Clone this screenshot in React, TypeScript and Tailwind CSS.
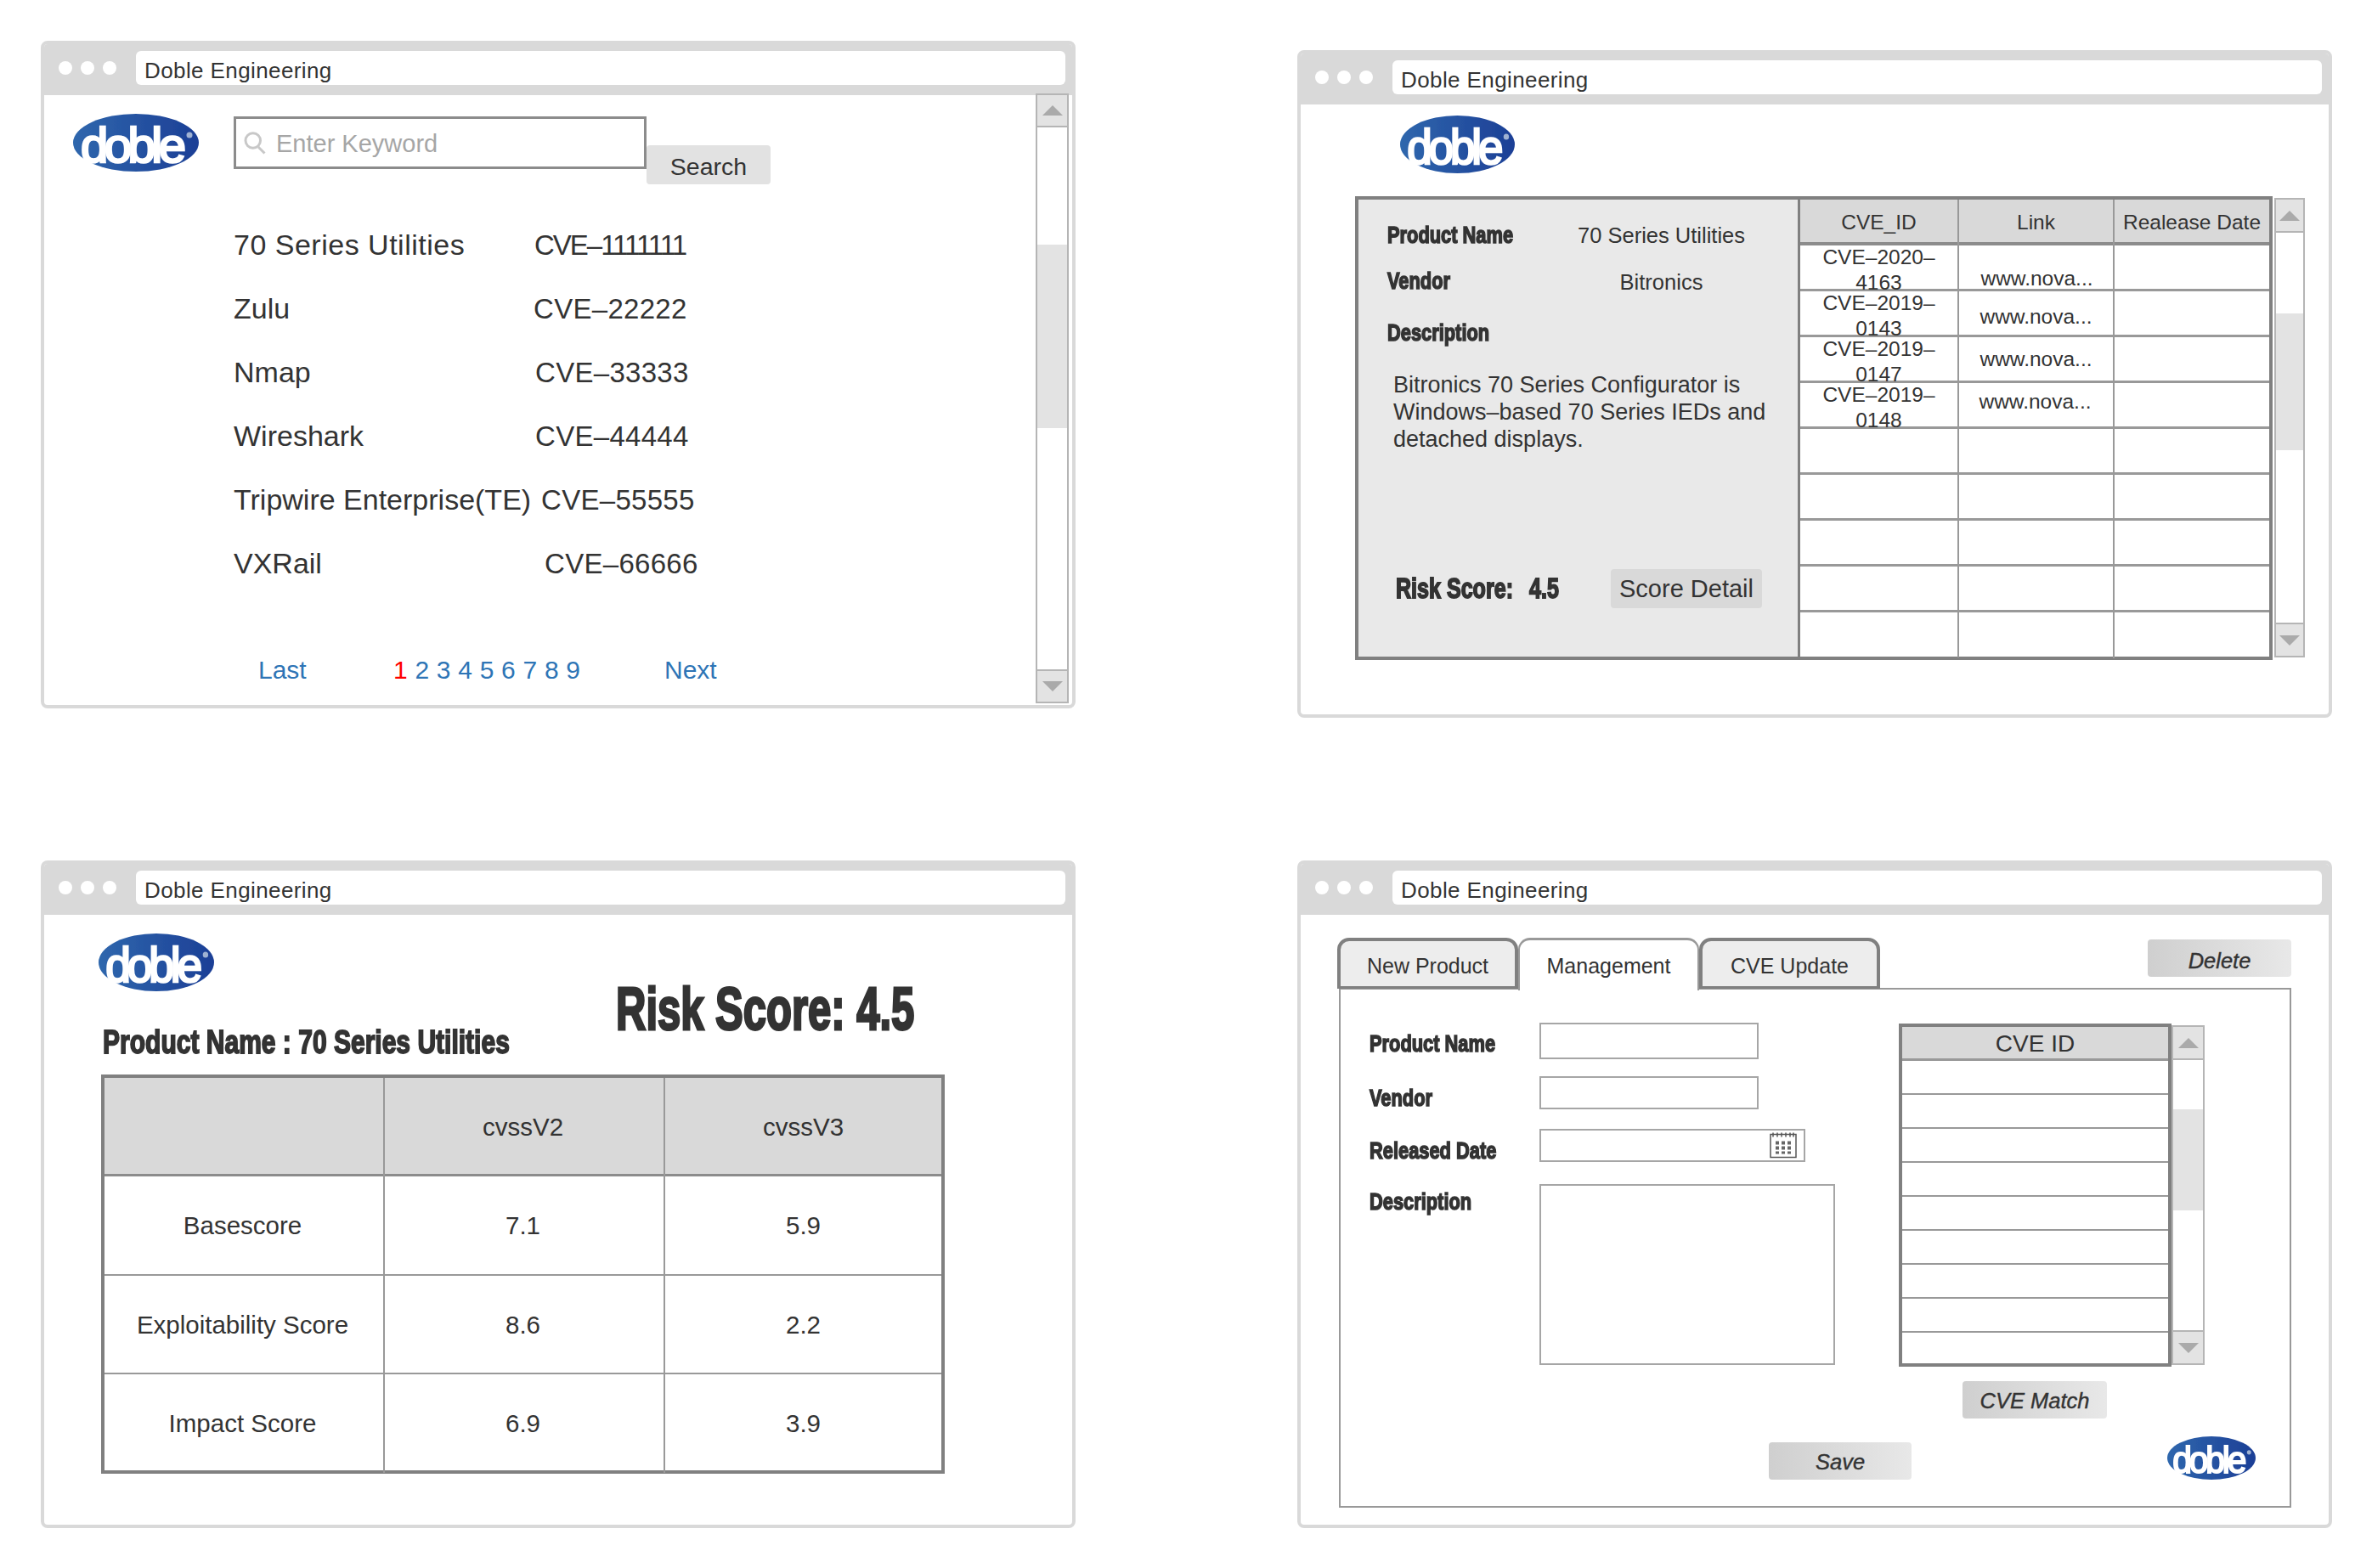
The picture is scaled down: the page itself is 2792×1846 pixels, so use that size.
import { ReactNode } from 'react';

const sans = "font-['Liberation_Sans',Arial,sans-serif]";

function Logo({ className }: { className: string }) {
  return (
    <svg viewBox="0 0 148 68" preserveAspectRatio="none" className={`overflow-visible ${className}`}>
      <defs>
        <linearGradient id="dobleBlue" x1="0" x2="1" y1="0" y2="0">
          <stop offset="0" stopColor="#2f67ad" />
          <stop offset="1" stopColor="#1c3f96" />
        </linearGradient>
        <filter id="soft"><feGaussianBlur stdDeviation="0.7" /></filter>
      </defs>
      <g filter="url(#soft)">
        <ellipse cx="74" cy="34" rx="74" ry="34" fill="url(#dobleBlue)" />
        <text x="9" y="57" fontFamily="Liberation Sans" fontSize="58" textLength="124" lengthAdjust="spacing" fill="#ffffff" stroke="#ffffff" strokeWidth="2.6">doble</text>
        <circle cx="137" cy="25" r="3.5" fill="#9fb2d2" />
      </g>
    </svg>
  );
}

// the heavy condensed headings of the wireframe
function Heavy({ children, className }: { children: ReactNode; className: string }) {
  return (
    <span className={`inline-block origin-left whitespace-nowrap font-bold ${className}`}>
      {children}
    </span>
  );
}

const label27 = 'text-[28px] scale-x-[0.78] [-webkit-text-stroke:1.6px_#333333]';

function Arrow({ down }: { down?: boolean }) {
  return (
    <svg viewBox="0 0 24 12" className="w-[24px] h-[12px]">
      <polygon points={down ? '0,0 24,0 12,12' : '12,0 24,12 0,12'} fill="#aaaaaa" />
    </svg>
  );
}

function Scrollbar({ className, thumbTop, thumbH, btn }: { className: string; thumbTop: string; thumbH: string; btn: string }) {
  return (
    <div className={`flex flex-col border-[2px] border-[#b5b5b5] bg-white ${className}`}>
      <div className={`${btn} flex items-center justify-center bg-[#e3e3e3] border-b-[2px] border-[#b5b5b5]`}>
        <Arrow />
      </div>
      <div className="flex-1">
        <div className={`${thumbTop} ${thumbH} bg-[#e3e3e3]`} />
      </div>
      <div className={`${btn} flex items-center justify-center bg-[#e3e3e3] border-t-[2px] border-[#b5b5b5]`}>
        <Arrow down />
      </div>
    </div>
  );
}

function Window({ children, className = '' }: { children: ReactNode; className?: string }) {
  return (
    <div className={`w-[1218px] h-[786px] rounded-[8px] border-[4px] border-[#d9d9d9] bg-white overflow-hidden ${sans} text-[#333333] ${className}`}>
      <div className="h-[60px] bg-[#d9d9d9] flex items-start pt-[8px] pl-[17px] pr-[8px]">
        <div className="flex gap-[10px] w-[91px] pt-[12px]">
          <div className="w-[16px] h-[16px] rounded-full bg-white" />
          <div className="w-[16px] h-[16px] rounded-full bg-white" />
          <div className="w-[16px] h-[16px] rounded-full bg-white" />
        </div>
        <div className="flex-1 h-[40px] rounded-[6px] bg-white pl-[10px] text-[26px] tracking-[0.4px] leading-[46px]">Doble Engineering</div>
      </div>
      {children}
    </div>
  );
}

const products = [
  { label: '70 Series Utilities', cve: 'CVE–1111111', w: 'w-[354px] tracking-[0.5px]', track: 'tracking-[-2px]' },
  { label: 'Zulu', cve: 'CVE–22222', w: 'w-[353px]', track: 'tracking-[0.3px]' },
  { label: 'Nmap', cve: 'CVE–33333', w: 'w-[355px]', track: 'tracking-[0.3px]' },
  { label: 'Wireshark', cve: 'CVE–44444', w: 'w-[355px]', track: 'tracking-[0.3px]' },
  { label: 'Tripwire Enterprise(TE)', cve: 'CVE–55555', w: 'w-[362px]', track: 'tracking-[0.3px]' },
  { label: 'VXRail', cve: 'CVE–66666', w: 'w-[366px]', track: 'tracking-[0.3px]' },
];

function SearchWindow() {
  return (
    <Window>
      <div className="flex">
        <div className="flex-1">
          <div className="flex items-start pt-[22px] pl-[34px]">
            <Logo className="w-[148px] h-[68px]" />
            <div className="ml-[41px] mt-[3px] w-[486px] h-[62px] border-[3px] border-[#8c8c8c] flex items-center pl-[6px]">
              <svg viewBox="0 0 24 24" className="w-[30px] h-[30px]" fill="none" stroke="#c8c8c8" strokeWidth="2.4">
                <circle cx="11" cy="10" r="7" />
                <path d="M16 16l6 6" />
              </svg>
              <span className="ml-[11px] mt-[4px] text-[29px] text-[#a6a6a6]">Enter Keyword</span>
            </div>
            <div className="mt-[37px] w-[146px] h-[46px] rounded-[4px] bg-[#e2e2e2] text-[28.5px] leading-[50px] text-center">Search</div>
          </div>
          <div className="ml-[223px] mt-[34px]">
            {products.map((p) => (
              <div key={p.cve} className="flex h-[75px] items-center">
                <div className={`${p.w} whitespace-nowrap text-[34px]`}>{p.label}</div>
                <div className={`${p.track} text-[33px]`}>{p.cve}</div>
              </div>
            ))}
          </div>
          <div className="ml-[252px] mt-[65px] flex text-[30px] text-[#2e75b6]">
            <div className="w-[159px]">Last</div>
            <div className="w-[319px] whitespace-nowrap [word-spacing:0.4px]"><span className="text-[#ff0000]">1</span> 2 3 4 5 6 7 8 9</div>
            <div>Next</div>
          </div>
        </div>
        <Scrollbar className="w-[39px] h-[718px] -mt-[2px] mr-[4px]" btn="h-[38px]" thumbTop="mt-[138px]" thumbH="h-[216px]" />
      </div>
    </Window>
  );
}

const cves = [
  { id: ['CVE–2020–', '4163'], link: 'pt-[24px] pl-[2px]' },
  { id: ['CVE–2019–', '0143'], link: 'pt-[15px]' },
  { id: ['CVE–2019–', '0147'], link: 'pt-[11px]' },
  { id: ['CVE–2019–', '0148'], link: 'pt-[7px] pr-[2px]' },
];

function DetailWindow() {
  return (
    <Window className="mt-[11px]">
      <div className="pl-[117px] pt-[13px]"><Logo className="w-[135px] h-[68px]" /></div>
      <div className="flex items-start ml-[64px] mt-[27px]">
        <div className="w-[1080px] h-[546px] border-[4px] border-[#808080] flex">
          <div className="w-[520px] bg-[#e9e9e9] border-r-[3px] border-[#808080] pt-[28px] text-[25.5px]">
            <div className="flex items-center h-[28px] pl-[34px]">
              <div className="w-[200px]"><Heavy className={label27}>Product Name</Heavy></div>
              <div className="w-[245px] text-center">70 Series Utilities</div>
            </div>
            <div className="flex items-center h-[28px] mt-[26px] pl-[34px]">
              <div className="w-[200px]"><Heavy className={label27}>Vendor</Heavy></div>
              <div className="w-[245px] text-center pt-[2px]">Bitronics</div>
            </div>
            <div className="h-[28px] mt-[26px] pl-[34px]"><Heavy className={label27}>Description</Heavy></div>
            <div className="mt-[38px] pl-[41px] text-[27px] leading-[32px] w-[510px]">
              Bitronics 70 Series Configurator is Windows–based 70 Series IEDs and detached displays.
            </div>
            <div className="flex items-center mt-[135px] pl-[44px]">
              <div className="w-[157px]"><Heavy className="text-[33px] scale-x-[0.76] [-webkit-text-stroke:1.8px_#333333]">Risk Score:</Heavy></div>
              <div className="w-[96px]"><Heavy className="text-[33px] scale-x-[0.76] [-webkit-text-stroke:1.8px_#333333]">4.5</Heavy></div>
              <div className="w-[178px] h-[46px] rounded-[4px] bg-[#d9d9d9] text-[29px] leading-[46px] text-center">Score Detail</div>
            </div>
          </div>
          <div className="flex-1 text-[24.5px]">
            <div className="grid grid-cols-[187px_183px_1fr] h-[54px] bg-[#d9d9d9] border-b-[4px] border-[#8c8c8c] leading-[54px] text-center">
              <div className="border-r-[2px] border-[#999999]">CVE_ID</div>
              <div className="border-r-[2px] border-[#999999]">Link</div>
              <div className="whitespace-nowrap">Realease Date</div>
            </div>
            {Array.from({ length: 9 }).map((_, i) => (
              <div key={i} className="grid grid-cols-[187px_183px_1fr] h-[54px] border-b-[3px] border-[#999999] last:border-b-0 text-center leading-[30px]">
                <div className="border-r-[2px] border-[#999999] h-[54px] -mt-[1px]">
                  {cves[i] && (<><div>{cves[i].id[0]}</div><div>{cves[i].id[1]}</div></>)}
                </div>
                <div className={`border-r-[2px] border-[#999999] h-[54px] ${cves[i] ? cves[i].link : ''}`}>
                  {cves[i] && 'www.nova...'}
                </div>
                <div />
              </div>
            ))}
          </div>
        </div>
        <Scrollbar className="w-[36px] h-[541px] ml-[2px] mt-[2px]" btn="h-[39px]" thumbTop="mt-[95px]" thumbH="h-[161px]" />
      </div>
    </Window>
  );
}

const scores = [
  { cells: ['Basescore', '7.1', '5.9'], h: 'h-[117px]' },
  { cells: ['Exploitability Score', '8.6', '2.2'], h: 'h-[116px]' },
  { cells: ['Impact Score', '6.9', '3.9'], h: 'h-[115px]' },
];

function ScoreWindow() {
  return (
    <Window>
      <div className="pl-[64px] pt-[22px]"><Logo className="w-[136px] h-[68px]" /></div>
      <div className="flex items-start h-[111px] ml-[69px] -mt-[13px]">
        <div className="w-[604px] mt-[55px] leading-[36px]"><Heavy className="text-[38px] scale-x-[0.79] [-webkit-text-stroke:1.8px_#333333]">Product Name : 70 Series Utilities</Heavy></div>
        <div className="leading-[68px]"><Heavy className="text-[70px] scale-x-[0.7] [-webkit-text-stroke:3px_#333333]">Risk Score: 4.5</Heavy></div>
      </div>
      <div className="ml-[67px] w-[993px] h-[470px] border-[4px] border-[#808080] text-[29.5px]">
        <div className="grid grid-cols-[330px_330px_1fr] h-[116px] bg-[#d9d9d9] border-b-[3px] border-[#8c8c8c] text-center leading-[116px]">
          <div className="border-r-[2px] border-[#999999]" />
          <div className="border-r-[2px] border-[#999999] pr-[3px]">cvssV2</div>
          <div>cvssV3</div>
        </div>
        {scores.map((row) => (
          <div key={row.cells[0]} className={`grid grid-cols-[330px_330px_1fr] ${row.h} border-b-[2px] border-[#999999] last:border-b-0 text-center leading-[116px]`}>
            <div className="border-r-[2px] border-[#999999] pr-[3px]">{row.cells[0]}</div>
            <div className="border-r-[2px] border-[#999999] pr-[3px]">{row.cells[1]}</div>
            <div>{row.cells[2]}</div>
          </div>
        ))}
      </div>
    </Window>
  );
}

function Tab({ label, active }: { label: string; active?: boolean }) {
  return (
    <div className={`w-[213px] rounded-t-[14px] text-center text-[25px] ${active ? 'h-[62px] leading-[60px] bg-white border-x-[2px] border-t-[3px] border-[#999999] z-10' : 'h-[60px] leading-[58px] bg-[#ededed] border-[4px] border-b-[3px] border-[#808080]'}`}>
      {label}
    </div>
  );
}

function GreyButton({ label, className }: { label: string; className: string }) {
  return (
    <div className={`h-[44px] rounded-[4px] bg-linear-to-r from-[#cfcfcf] to-[#e8e8e8] text-center text-[25.5px] italic [-webkit-text-stroke:0.4px_#333333] ${className}`}>
      {label}
    </div>
  );
}

function ManageWindow() {
  const label = 'pl-[34px] h-[26px] leading-[26px]';
  return (
    <Window>
      <div className="flex items-start pt-[27px] pl-[43px] pr-[44px] h-[86px]">
        <Tab label="New Product" />
        <Tab label="Management" active />
        <Tab label="CVE Update" />
        <GreyButton label="Delete" className="w-[169px] ml-auto mt-[2px] leading-[50px]" />
      </div>
      <div className="ml-[45px] w-[1121px] h-[612px] border-[2px] border-[#999999]">
        <div className="flex items-start pt-[39px]">
          <div className="grid grid-cols-[234px_auto] items-start">
            <div className={`${label} mt-[12px]`}><Heavy className={label27}>Product Name</Heavy></div>
            <div className="w-[258px] h-[43px] border-[2px] border-[#a6a6a6]" />
            <div className={`${label} mt-[33px]`}><Heavy className={label27}>Vendor</Heavy></div>
            <div className="w-[258px] h-[39px] mt-[20px] border-[2px] border-[#a6a6a6]" />
            <div className={`${label} mt-[36px]`}><Heavy className={label27}>Released Date</Heavy></div>
            <div className="w-[313px] h-[39px] mt-[23px] border-[2px] border-[#a6a6a6] flex justify-end pr-[8px]">
              <svg viewBox="0 0 32 32" className="w-[32px] h-[35px]" fill="none">
                <rect x="1" y="3" width="30" height="27" fill="#ffffff" stroke="#555555" strokeWidth="1.5" />
                <path d="M4 1v5M9 1v5M14 1v5M19 1v5M24 1v5M28 1v5" stroke="#555555" strokeWidth="1.5" />
                <g fill="#666666">
                  <rect x="7" y="11" width="4" height="4" /><rect x="14" y="11" width="4" height="4" /><rect x="21" y="11" width="4" height="4" />
                  <rect x="7" y="17" width="4" height="4" /><rect x="14" y="17" width="4" height="4" /><rect x="21" y="17" width="4" height="4" />
                  <rect x="7" y="23" width="4" height="3" /><rect x="14" y="23" width="4" height="3" /><rect x="21" y="23" width="4" height="3" />
                </g>
              </svg>
            </div>
            <div className={`${label} mt-[34px]`}><Heavy className={label27}>Description</Heavy></div>
            <div className="w-[348px] h-[213px] mt-[26px] border-[2px] border-[#a6a6a6]" />
          </div>
          <div className="ml-[75px] mt-[1px]">
            <div className="flex items-start">
              <div className="w-[321px] h-[404px] border-[4px] border-[#808080]">
                <div className="h-[40px] bg-[#d9d9d9] border-b-[3px] border-[#999999] text-center text-[28px] leading-[40px]">CVE ID</div>
                {Array.from({ length: 9 }).map((_, i) => (
                  <div key={i} className="h-[40px] border-b-[2px] border-[#999999] last:border-b-0" />
                ))}
              </div>
              <Scrollbar className="w-[39px] h-[400px] mt-[2px]" btn="h-[39px]" thumbTop="mt-[58px]" thumbH="h-[119px]" />
            </div>
            <GreyButton label="CVE Match" className="w-[170px] ml-[75px] mt-[17px] leading-[46px]" />
          </div>
        </div>
        <div className="flex items-start pl-[504px] mt-[21px]">
          <GreyButton label="Save" className="w-[168px] mt-[7px] leading-[46px]" />
          <Logo className="w-[104px] h-[51px] ml-[301px]" />
        </div>
      </div>
    </Window>
  );
}

export default function App() {
  return (
    <div className="w-[2792px] h-[1846px] bg-white pl-[48px] pt-[48px] grid grid-cols-[1218px_1218px] gap-x-[261px] gap-y-[168px] content-start">
      <SearchWindow />
      <DetailWindow />
      <ScoreWindow />
      <ManageWindow />
    </div>
  );
}
